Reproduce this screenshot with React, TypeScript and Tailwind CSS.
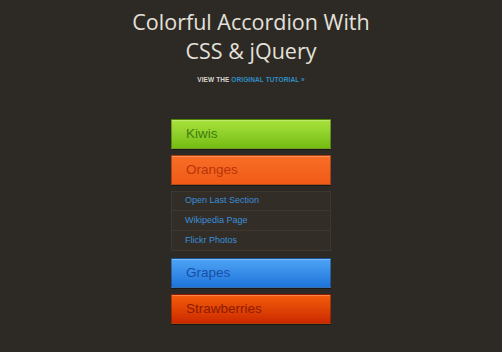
function Bar({ label, cls }: { label: string; cls: string }) {
  return (
    <div
      className={`h-[30px] w-[160px] flex items-center pl-[14px] text-[13.5px] bg-gradient-to-b border border-black/30 shadow-[inset_0_1px_0_rgba(255,255,255,0.25),0_1px_0_rgba(0,0,0,0.4)] ${cls}`}
    >
      {label}
    </div>
  );
}

const subItems = ["Open Last Section", "Wikipedia Page", "Flickr Photos"];

export default function App() {
  return (
    <div
      className="w-[502px] h-[352px] bg-[#2d2924] flex flex-col items-center overflow-hidden"
      style={{ fontFamily: "'Liberation Sans', Arial, sans-serif" }}
    >
      <h1
        className="mt-[7px] text-center text-[#e4e1da] text-[21.5px] leading-[29px]"
        style={{ fontFamily: "'Open Sans', sans-serif" }}
      >
        Colorful Accordion With
        <br />
        CSS &amp; jQuery
      </h1>
      <p className="mt-[10px] text-[6.5px] font-bold tracking-[0.1px] text-[#d8d5cf] uppercase">
        View the <span className="text-[#2f8fc4]">Original Tutorial »</span>
      </p>

      <div className="mt-[34px] flex flex-col gap-[6px]">
        <Bar label="Kiwis" cls="from-[#a9e23c] to-[#74bd10] text-[#3f7d0e]" />
        <Bar label="Oranges" cls="from-[#f86e26] to-[#f05a16] text-[#b8330a]" />
        <div className="flex flex-col w-[160px] border border-[#3d3730] mb-[1px]">
          {subItems.map((s) => (
            <div
              key={s}
              className="h-[19.5px] flex items-center pl-[13px] text-[9px] text-[#3a8fda] bg-[#322d27] border-b border-[#3e3831] last:border-b-0"
            >
              {s}
            </div>
          ))}
        </div>
        <Bar label="Grapes" cls="from-[#4ea4f4] to-[#1f74dc] text-[#1550a6]" />
        <Bar label="Strawberries" cls="from-[#f55c0c] to-[#cc2800] text-[#8d1c00]" />
      </div>
    </div>
  );
}
